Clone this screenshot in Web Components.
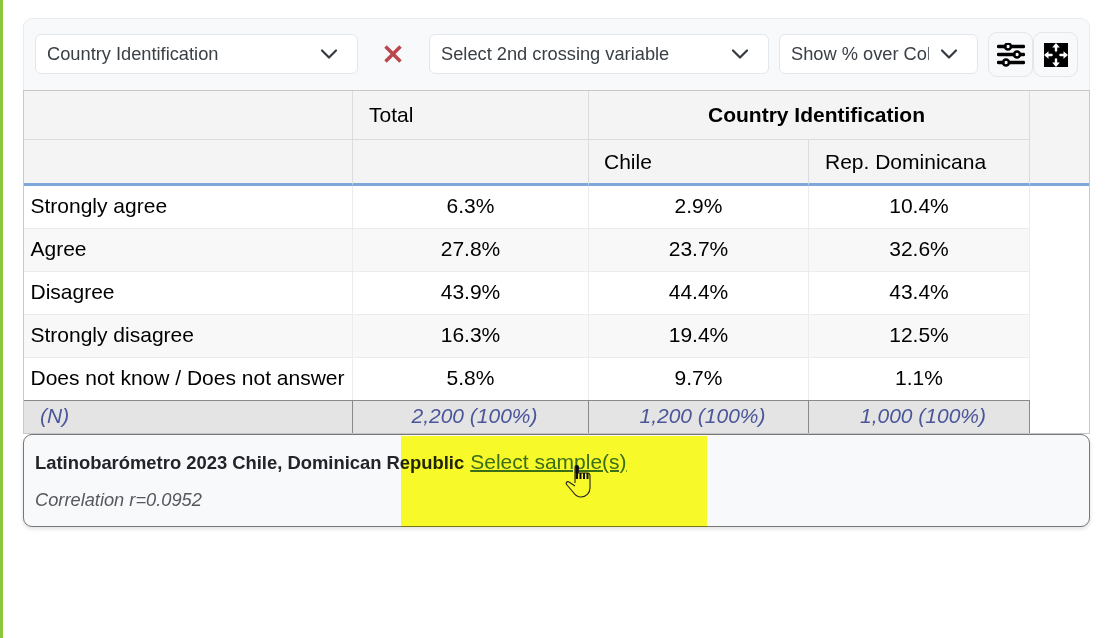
<!DOCTYPE html>
<html><head><meta charset="utf-8">
<style>
html,body{margin:0;padding:0;background:#fff;font-family:"Liberation Sans",Arial,sans-serif;}
body{width:1116px;height:638px;overflow:hidden;}
</style></head>
<body>
<x-page>
  <x-toolbar>
    <x-select style="--w:323px" label="Country Identification"></x-select>
    <x-clear></x-clear>
    <x-select style="--w:340px" label="Select 2nd crossing variable"></x-select>
    <x-select style="--w:199px;--gap:10px" label="Show % over Columns" clip></x-select>
    <x-icon-btn icon="sliders" style="--gap:10px"></x-icon-btn>
    <x-icon-btn icon="expand"></x-icon-btn>
  </x-toolbar>
  <x-crosstab></x-crosstab>
  <x-info-card>
    <b slot="title">Latinobarómetro 2023 Chile, Dominican Republic</b>
    <span slot="link">Select sample(s)</span>
    <span slot="note">Correlation r=0.0952</span>
  </x-info-card>
  <x-highlight></x-highlight>
</x-page>
<script>
function def(name, css, html){
  customElements.define(name, class extends HTMLElement{
    constructor(){super();const r=this.attachShadow({mode:'open'});
      r.innerHTML='<style>'+css+'</style>'+(typeof html==='function'?html(this):html);}
  });
}
def('x-page',`
 :host{display:block;position:relative;box-sizing:border-box;width:1116px;height:638px;border-left:3px solid #8cc63f;padding:18px 0 0 20px;}
`,`<slot></slot>`);

def('x-toolbar',`
 :host{display:flex;align-items:center;box-sizing:border-box;width:1067px;height:72px;padding:0 11px 2px;
   background:#f8f9fa;border:1px solid #e9ecef;border-bottom:0;border-radius:9px 9px 0 0;}
`,`<slot></slot>`);

def('x-select',`
 :host{display:flex;align-items:center;box-sizing:border-box;width:var(--w);height:40px;margin-left:var(--gap,0);
   background:#fff;border:1px solid #e3e6ea;border-radius:6px;padding:0 19px 0 11px;color:#3a4046;font-size:18.25px;}
 .t{flex:1;white-space:nowrap;overflow:hidden;}
 :host([clip]) .t{flex:none;width:138px;}
 svg{width:18px;height:12px;flex:none;margin-left:auto;}
`,(el)=>`<span class="t">${el.getAttribute('label')}</span>
 <svg viewBox="0 0 18 12"><path d="M2 2.5l7 7 7-7" fill="none" stroke="#343a40" stroke-width="2.2" stroke-linecap="round" stroke-linejoin="round"/></svg>`);

def('x-clear',`
 :host{display:flex;align-items:center;justify-content:center;width:71px;height:40px;}
 svg{width:18px;height:18px;margin-right:2px;}
`,`<svg viewBox="0 0 18 18"><path d="M1.500 1.500l15 15M16.500 1.500l-15 15" stroke="#b9474c" stroke-width="3.500" fill="none"/></svg>`);

const ICONS={
 sliders:`<svg width="28" height="24" viewBox="0 0 28 24" fill="none" stroke="#000" stroke-width="3.400">
   <path d="M1.500 3.500h6.500M14.500 3.500h12M1.500 11.500h15.500M23.500 11.500h3M1.500 19.500h4.500M12.500 19.500h14" stroke-linecap="round"/>
   <circle cx="11" cy="3.500" r="3" stroke-width="2.500"/><circle cx="20" cy="11.500" r="3" stroke-width="2.500"/><circle cx="9" cy="19.500" r="3" stroke-width="2.500"/></svg>`,
 expand:`<svg width="24" height="24" viewBox="0 0 24 24"><path fill="#000" d="M0 0h24v24H0z"/>
   <path fill="#fff" d="M12 0l3.800 4.500h-2.600V8L12 9 10.800 8V4.500H8.200z"/>
   <path fill="#fff" d="M12 24l3.800-4.500h-2.600V16L12 15l-1.200 1v3.500H8.200z"/>
   <path fill="#fff" d="M0 12l4.500-3.800v2.600H8L9 12l-1 1.200H4.500v2.600z"/>
   <path fill="#fff" d="M24 12l-4.500-3.800v2.600H16L15 12l1 1.200h3.500v2.600z"/></svg>`
};
def('x-icon-btn',`
 :host{display:flex;align-items:center;justify-content:center;box-sizing:border-box;width:45px;height:45px;margin-left:var(--gap,0);margin-top:2px;
   border:1px solid #e3e6ea;border-radius:9px;background:#f8f9fa;}
 svg{display:block;}
`,(el)=>ICONS[el.getAttribute('icon')]);

const ROWS=[
 ['Strongly agree','6.3%','2.9%','10.4%'],
 ['Agree','27.8%','23.7%','32.6%'],
 ['Disagree','43.9%','44.4%','43.4%'],
 ['Strongly disagree','16.3%','19.4%','12.5%'],
 ['Does not know / Does not answer','5.8%','9.7%','1.1%']];
def('x-crosstab',`
 :host{display:block;box-sizing:border-box;width:1067px;border:1px solid #c8c8c8;font-size:21px;color:#000;background:#fff;}
 table{border-collapse:separate;border-spacing:0;width:100%;table-layout:fixed;}
 th,td{padding:0;font-weight:400;box-sizing:border-box;white-space:nowrap;}
 thead th{background:#f4f4f4;border-right:1px solid #dcdcdc;border-bottom:1px solid #dcdcdc;text-align:left;padding-left:15px;}
 thead th.s{padding-left:16px;}
 thead tr:nth-child(1) th{height:49px;}
 thead tr:nth-child(2) th{height:46px;border-bottom:3px solid #7ea6d8;}
 thead th.g{text-align:center;font-weight:700;}
 thead th.e{border-right:0;}
 thead tr:nth-child(1) th.e{border-bottom:3px solid #7ea6d8;}
 tbody td{height:43px;text-align:center;border-right:1px solid #ececec;border-bottom:1px solid #ececec;padding-bottom:2px;}
 tbody tr:nth-child(5) td{height:42px;border-bottom:0;}
 tbody td:first-child{text-align:left;padding-left:6.5px;}
 tbody tr:nth-child(even) td{background:#f8f8f8;}
 tbody td.e{background:#fff !important;border:0;}
 tbody tr.n td{height:33px;background:#e4e4e4;border-right:1px solid #8a8a8a;border-top:1px solid #8a8a8a;border-bottom:0;color:#4a5699;font-style:italic;padding:0 0 3px 8px;}
 tbody tr.n td:first-child{padding-left:16px;}
 tbody tr.n td.e{background:#fff;border:0;}
`,`<table>
 <colgroup><col style="width:329px"><col style="width:236px"><col style="width:220px"><col style="width:221px"><col></colgroup>
 <thead>
  <tr><th></th><th class="s">Total</th><th class="g" colspan="2">Country Identification</th><th class="e" rowspan="2"></th></tr>
  <tr><th></th><th></th><th>Chile</th><th class="s">Rep. Dominicana</th></tr>
 </thead>
 <tbody>${ROWS.map(r=>`<tr>${r.map(c=>`<td>${c}</td>`).join('')}<td class="e"></td></tr>`).join('')}
  <tr class="n"><td>(N)</td><td>2,200 (100%)</td><td>1,200 (100%)</td><td>1,000 (100%)</td><td class="e"></td></tr>
 </tbody></table>`);

def('x-info-card',`
 :host{display:block;box-sizing:border-box;width:1067px;height:93px;padding:15px 11px 0;
   background:#f8f9fb;border:1px solid #777;border-radius:9px;box-shadow:0 2px 4px rgba(0,0,0,.12);color:#212529;}
 .l{display:flex;align-items:baseline;gap:6px;height:26px;}
 ::slotted([slot=title]){font-size:18.4px;font-weight:700;}
 ::slotted([slot=link]){font-size:21px;color:#3a6ea0;text-decoration:underline;text-decoration-thickness:2px;}
 .n{margin-top:13px;font-size:18.25px;font-style:italic;color:#55595e;}
`,`<div class="l"><slot name="title"></slot><slot name="link"></slot></div><div class="n"><slot name="note"></slot></div>`);

def('x-highlight',`
 :host{display:block;position:absolute;left:398px;top:436px;width:306px;height:91px;background:#ffff28;mix-blend-mode:multiply;}
 svg{position:absolute;left:161px;top:27px;}
`,`<svg width="32" height="36" viewBox="0 0 32 36" fill="none" stroke="#222" stroke-width="1.100">
 <path d="M13 20V4c0-2 3.500-2 3.500 0v6h9c1.500 0 2.500 1 2.500 3v12c0 5-4 9-9 9-4 0-6-2-8-5l-6-7c-2-2 0-4 2-3l6 4"/>
 <path d="M14.800 3v13" stroke="#111" stroke-width="2.500"/>
 <path d="M18.500 10v6M22 10v6M25.500 10v6" stroke="#111" stroke-width="2"/></svg>`);
</script>
</body></html>
